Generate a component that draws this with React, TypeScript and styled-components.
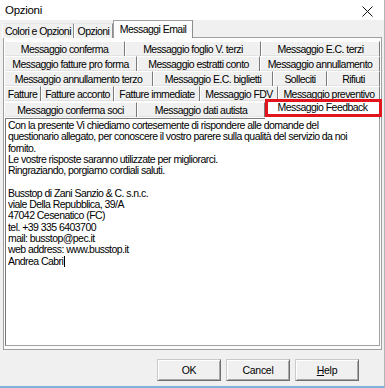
import styled, { createGlobalStyle } from "styled-components";

const GlobalStyle = createGlobalStyle`
  html, body {
    margin: 0;
    padding: 0;
    background: #ffffff;
  }
  body {
    font-family: "Liberation Sans", Arial, sans-serif;
  }
`;

type Tab = { label: string; w: number; active?: boolean };

const topTabs: Tab[] = [
  { label: "Colori e Opzioni", w: 72 },
  { label: "Opzioni", w: 39 },
  { label: "Messaggi Email", w: 80, active: true },
];

const tabRows: Tab[][] = [
  [
    { label: "Messaggio conferma", w: 121 },
    { label: "Messaggio foglio V. terzi", w: 136 },
    { label: "Messaggio E.C. terzi", w: 119 },
  ],
  [
    { label: "Messaggio fatture pro forma", w: 133 },
    { label: "Messaggio estratti conto", w: 123 },
    { label: "Messaggio annullamento", w: 120 },
  ],
  [
    { label: "Messaggio annullamento terzo", w: 149 },
    { label: "Messaggio E.C. biglietti", w: 120 },
    { label: "Solleciti", w: 54 },
    { label: "Rifiuti", w: 53 },
  ],
  [
    { label: "Fatture", w: 37 },
    { label: "Fatture acconto", w: 73 },
    { label: "Fatture immediate", w: 86 },
    { label: "Messaggio FDV", w: 78 },
    { label: "Messaggio preventivo", w: 102 },
  ],
  [
    { label: "Messaggio conferma soci", w: 133 },
    { label: "Messaggio dati autista", w: 128 },
    { label: "Messaggio Feedback", w: 115, active: true },
  ],
];

const lines = [
  "Con la presente Vi chiediamo cortesemente di rispondere alle domande del",
  "questionario allegato, per conoscere il vostro parere sulla qualità del servizio da noi",
  "fornito.",
  "Le vostre risposte saranno utilizzate per migliorarci.",
  "Ringraziando, porgiamo cordiali saluti.",
  "",
  "Busstop di Zani Sanzio & C. s.n.c.",
  "viale Della Repubblica, 39/A",
  "47042 Cesenatico (FC)",
  "tel. +39 335 6403700",
  "mail: busstop@pec.it",
  "web address: www.busstop.it",
];

const App = () => {
  return (
    <>
      <GlobalStyle />
      <Window>
        <TitleBar>
          <Title>Opzioni</Title>
          <CloseIcon width="11" height="11" viewBox="0 0 11 11">
            <path d="M0.5 0.5 L10.5 10.5 M10.5 0.5 L0.5 10.5" stroke="#111" strokeWidth="1" />
          </CloseIcon>
        </TitleBar>

        <TopTabBar>
          {topTabs.map((t) => (
            <TopTab key={t.label} $w={t.w} $active={t.active}>
              {t.label}
            </TopTab>
          ))}
        </TopTabBar>

        <Page>
          {tabRows.map((row, i) => (
            <TabRow key={i} $last={i === tabRows.length - 1}>
              {row.map((t) => (
                <InnerTab key={t.label} $w={t.w} $active={t.active}>
                  {t.label}
                </InnerTab>
              ))}
            </TabRow>
          ))}
          <TextBox>
            {lines.map((l, i) => (
              <Line key={i}>{l || "\u00a0"}</Line>
            ))}
            <Line>
              Andrea Cabri
              <Caret />
            </Line>
          </TextBox>
        </Page>

        <ButtonBar>
          <Button>OK</Button>
          <Button>Cancel</Button>
          <Button>
            <u>H</u>elp
          </Button>
        </ButtonBar>
      </Window>
    </>
  );
};

const Window = styled.div`
  width: 384px;
  height: 386px;
  background: #f0f0f0;
  border-right: 1px solid #b4b4b4;
  border-bottom: 2px solid #7fb0de;
  display: flex;
  flex-direction: column;
  font-family: "Liberation Sans", Arial, sans-serif;
  color: #000;
`;

const TitleBar = styled.div`
  height: 20px;
  flex-shrink: 0;
  background: #ffffff;
  display: flex;
  align-items: center;
  justify-content: space-between;
  padding: 0 11px 0 5px;
`;

const Title = styled.span`
  font-size: 11.5px;
  letter-spacing: -0.3px;
  margin-top: 0;
`;

const CloseIcon = styled.svg`
  display: block;
  margin-top: 2px;
`;

const TopTabBar = styled.div`
  height: 18px;
  flex-shrink: 0;
  display: flex;
  align-items: flex-end;
  padding-left: 2px;
  margin-bottom: -1px;
  position: relative;
  z-index: 1;
`;

const TopTab = styled.div<{ $w: number; $active?: boolean }>`
  box-sizing: border-box;
  width: ${(p) => p.$w}px;
  height: ${(p) => (p.$active ? 18 : 15)}px;
  background: ${(p) => (p.$active ? "#fcfcfc" : "#f0f0f0")};
  border-top: 1px solid ${(p) => (p.$active ? "#a0a0a0" : "#e6e6e6")};
  border-left: 1px solid ${(p) => (p.$active ? "#a0a0a0" : "#ffffff")};
  border-right: 1px solid #8c8c8c;
  display: flex;
  align-items: center;
  justify-content: center;
  font-size: 10.5px;
  letter-spacing: -0.55px;
  white-space: nowrap;
  padding-bottom: ${(p) => (p.$active ? 1 : 0)}px;
`;

const Page = styled.div`
  box-sizing: border-box;
  height: 313px;
  margin: 0 2px 0 3px;
  flex-shrink: 0;
  background: #fcfcfc;
  border: 1px solid #a0a0a0;
  padding: 3px 0 3px 0;
  display: flex;
  flex-direction: column;
`;

const TabRow = styled.div<{ $last?: boolean }>`
  display: flex;
  align-items: flex-end;
  height: ${(p) => (p.$last ? 16 : 15)}px;
  flex-shrink: 0;
  margin-bottom: ${(p) => (p.$last ? 1 : 0)}px;
  position: relative;
  z-index: ${(p) => (p.$last ? 2 : 1)};
`;

const InnerTab = styled.div<{ $w: number; $active?: boolean }>`
  box-sizing: border-box;
  width: ${(p) => p.$w}px;
  height: ${(p) => (p.$active ? 20 : 15)}px;
  margin-bottom: ${(p) => (p.$active ? -2 : 0)}px;
  background: ${(p) => (p.$active ? "#ffffff" : "#f0f0f0")};
  border-top: 1px solid #ffffff;
  border-left: 1px solid #ffffff;
  border-right: 1px solid #7a7a7a;
  box-shadow: ${(p) => (p.$active ? "none" : "inset 0 -1px 0 #e2e2e2")};
  display: flex;
  align-items: ${(p) => (p.$active ? "flex-start" : "center")};
  justify-content: center;
  padding-top: ${(p) => (p.$active ? 1 : 0)}px;
  font-size: 10.5px;
  letter-spacing: -0.55px;
  white-space: nowrap;
  position: relative;

  ${(p) =>
    p.$active &&
    `
    &::after {
      content: "";
      position: absolute;
      left: -1px;
      right: -3px;
      top: -1px;
      bottom: 2px;
      border: 3px solid #e2141e;
    }
  `}
`;

const TextBox = styled.div`
  flex: 1;
  margin: 0 1px 0 1px;
  background: #ffffff;
  border: 1px solid #a0a0a0;
  border-top-color: #7a7a7a;
  border-left-color: #7a7a7a;
  padding: 1px 0 0 2px;
  font-size: 10.5px;
  letter-spacing: -0.55px;
  line-height: 11.3px;
  overflow: hidden;
`;

const Line = styled.div`
  white-space: nowrap;
`;

const Caret = styled.span`
  display: inline-block;
  width: 1px;
  height: 11px;
  background: #000;
  vertical-align: -2px;
  margin-left: 1px;
`;

const ButtonBar = styled.div`
  display: flex;
  justify-content: flex-end;
  gap: 5px;
  margin-top: 9px;
  padding-right: 25px;
`;

const Button = styled.div`
  box-sizing: border-box;
  width: 64px;
  height: 22px;
  background: #f0f0f0;
  border: 1px solid;
  border-color: #c9c9c9 #6e6e6e #6e6e6e #c9c9c9;
  box-shadow: inset 1px 1px 0 #ffffff, inset -1px -1px 0 #a8a8a8;
  display: flex;
  align-items: center;
  justify-content: center;
  font-size: 10.5px;
  letter-spacing: -0.3px;
`;

export default App;
